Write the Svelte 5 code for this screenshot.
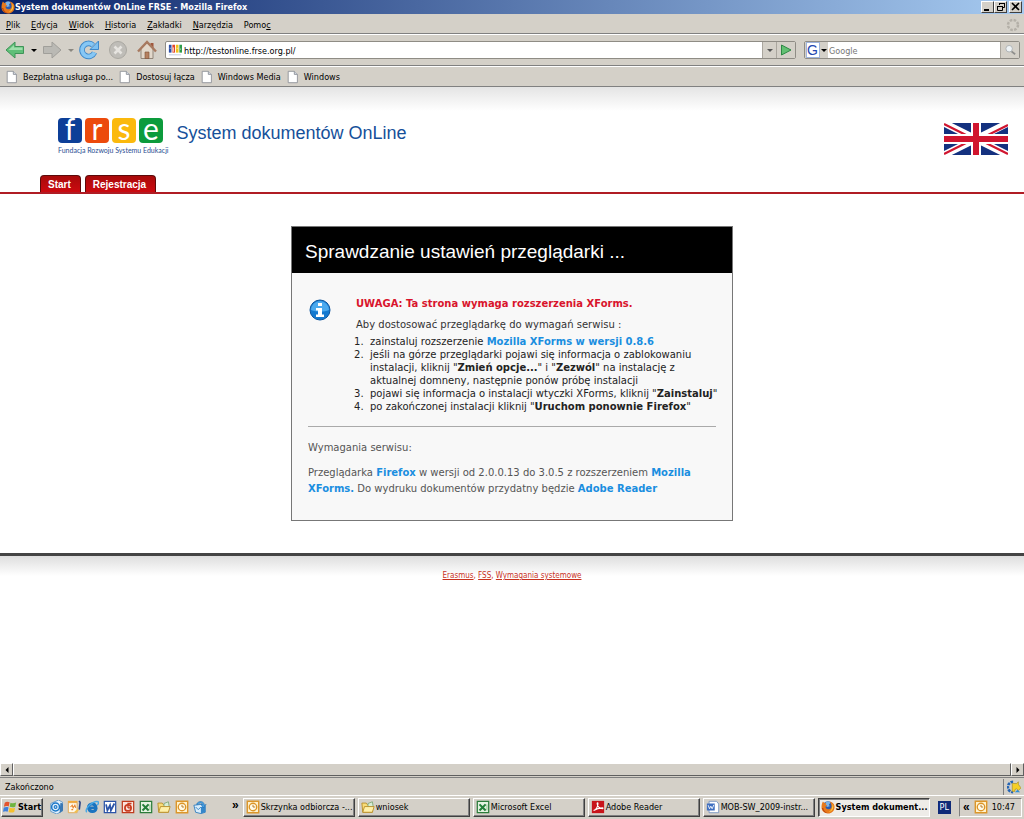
<script lang="ts">
	type Item = { name: string; icon: string; active?: boolean };

	const menu = [
		['', 'P', 'lik'],
		['', 'E', 'dycja'],
		['', 'W', 'idok'],
		['', 'H', 'istoria'],
		['', 'Z', 'akładki'],
		['', 'N', 'arzędzia'],
		['Pomo', 'c', '']
	];

	const bookmarks = ['Bezpłatna usługa po...', 'Dostosuj łącza', 'Windows Media', 'Windows'];

	const logo = [
		{ letter: 'f', color: 'blue' },
		{ letter: 'r', color: 'orange' },
		{ letter: 's', color: 'yellow' },
		{ letter: 'e', color: 'green' }
	];

	const quickLaunch: Item[] = [
		{ name: 'Outlook Express', icon: 'mail' },
		{ name: 'Pulpit', icon: 'note' },
		{ name: 'Internet Explorer', icon: 'ie' },
		{ name: 'Word', icon: 'word' },
		{ name: 'PowerPoint', icon: 'powerpoint' },
		{ name: 'Excel', icon: 'excel' },
		{ name: 'Folder', icon: 'folder' },
		{ name: 'Outlook', icon: 'outlook' },
		{ name: 'Poczta', icon: 'sync' }
	];

	const tasks: Item[] = [
		{ name: 'Skrzynka odbiorcza -...', icon: 'outlook' },
		{ name: 'wniosek', icon: 'folder' },
		{ name: 'Microsoft Excel', icon: 'excel' },
		{ name: 'Adobe Reader', icon: 'adobe' },
		{ name: 'MOB-SW_2009-instr...', icon: 'doc' },
		{ name: 'System dokument...', icon: 'firefox', active: true }
	];

	let address = $state('http://testonline.frse.org.pl/');
	let query = $state('');
</script>

{#snippet icon(name: string)}
	<svg class="icon" viewBox="0 0 16 16" aria-hidden="true">
		{#if name === 'firefox'}
			<circle cx="8" cy="8" r="6.6" fill="#2c5cae" />
			<path d="M5 3c2-2 5-1 6 0l-2 2 1 2-3 1-2-2z" fill="#7db4e6" />
			<path
				d="M2.2 1.6 4 3.6l2-.4-.7 1.9 2 1.3-2.2 1.4c0 2 1.7 3 3.4 2.8 3 0 4-2.400 3.300-5C11.400 3.600 10.400 2.400 9.500 1.800c4 .4 6.200 3.500 6 6.700-.3 4-3.300 6.900-7.300 6.900S.7 12.600.6 8.600C.5 6 1.200 3.500 2.200 1.600z"
				fill="#e8791a"
			/>
			<path d="M13.300 4.300c1.600 3 .8 8.400-4.400 9.300 2.800-1.600 4.300-4 4.400-9.300z" fill="#fbd042" />
			<path d="M1 9c1 4 4 6 7 6-3-1-5-3-5.500-6z" fill="#b8400d" />
		{:else if name === 'site'}
			<path fill="#2c4fa8" d="M1 2h3v9H1z" />
			<path fill="#e2452a" d="M5 2h3v9H5z" />
			<path fill="#f2c21a" d="M9 2h3v9H9z" />
			<path fill="#2f9c4a" d="M13 2h3v9h-3z" />
			<path d="M2 6h1M6 5v5M10 6h1M14 7h1" stroke="#fff" />
			<path d="M1 13.500h14" stroke="#b9c6e0" />
		{:else if name === 'page'}
			<path d="M2.500 1.500h7l3.500 3.500v9.500H2.500z" fill="#fff" stroke="#8b8f96" />
			<path d="M9.500 1.500V5H13" fill="#d5dce6" stroke="#8b8f96" />
		{:else if name === 'mail'}
			<path d="M2 4 11 0l5 3v9l-7 4-7-3z" fill="#e3f1fd" stroke="#3b83c0" stroke-width=".8" />
			<path d="m13 3 3 1v8l-4 3z" fill="#3a78b4" />
			<circle cx="7.500" cy="8" r="4.500" fill="none" stroke="#1c78c8" stroke-width="1.800" />
			<circle cx="7.500" cy="8" r="1.600" fill="none" stroke="#1c78c8" stroke-width="1.300" />
		{:else if name === 'note'}
			<path d="M1.500 3h10v11.500h-10z" fill="#fff8e8" stroke="#e0a54b" />
			<path d="M1 2h11" stroke="#f2a93a" stroke-width="2" />
			<path d="m4 8 2-2 1 3 2-3 1 3M5 11h2" stroke="#e9812b" fill="none" stroke-width="1.200" />
			<path d="m14 1 1 2-1 8" stroke="#2c4384" stroke-width="1.800" fill="none" />
			<path d="m9 14 4-3" stroke="#f2c14c" stroke-width="2" />
		{:else if name === 'ie'}
			<path
				d="M12.500 10.500C11.500 14 5 14.500 4 9c-.6-5.500 8-6.500 8.600 0H5"
				fill="none"
				stroke="#1a74c0"
				stroke-width="3.400"
			/>
			<path d="M2 14C-1 10 10 0 15 2c1 1 0 3-1 4" fill="none" stroke="#46a8e6" stroke-width="1.600" />
		{:else if name === 'word'}
			<path d="M1.500 1.500h13v13h-13z" fill="#fff" stroke="#2b54a8" stroke-width="1.400" />
			<path d="m3.500 5 1.500 7 3-6 1 6 4-8" fill="none" stroke="#2b54a8" stroke-width="2" />
		{:else if name === 'powerpoint'}
			<path d="M1.500 1.500h13v13h-13z" fill="#fbe4dc" stroke="#c03a1d" stroke-width="1.400" />
			<circle cx="8" cy="9" r="3.500" fill="none" stroke="#c93c20" stroke-width="2" />
			<path d="M8 9V4h4M8 9h4" stroke="#c93c20" fill="none" stroke-width="1.500" />
		{:else if name === 'excel'}
			<path d="M1.500 1.500h13v13h-13z" fill="#e5f3e2" stroke="#2b7c3a" stroke-width="1.400" />
			<path d="m4 5 7 7M11 5l-7 7" stroke="#24803a" stroke-width="2.400" />
			<path d="M12.500 5v7" stroke="#8abf8c" />
		{:else if name === 'folder'}
			<path d="M1 3.500h5l1.500 2H13V14H2z" fill="#f8dc79" stroke="#b78b25" />
			<path d="m8 4 5-2 1 6H8z" fill="#d8ecd5" stroke="#7fa878" />
			<path d="M4 7.500h11L13 14H2z" fill="#fff0a8" stroke="#b78b25" />
		{:else if name === 'outlook'}
			<path d="M1.500 1.500h13v13h-13z" fill="#fff3cf" stroke="#dc962a" stroke-width="1.600" />
			<circle cx="8" cy="8" r="4.300" fill="#fffbe8" stroke="#dd9427" stroke-width="1.500" />
			<path d="M8 5.500V8h2.500" fill="none" stroke="#b26f16" />
		{:else if name === 'sync'}
			<path d="m1 6 8-1 5 2v7l-5 1.500L3 14z" fill="#d9edfb" stroke="#2c7bbf" />
			<path d="m9 8 5-1v7l-5 1.500z" fill="#3687ca" />
			<path d="m3 8 3 3 3-3" fill="none" stroke="#2c7bbf" />
			<path d="M4 5c2-5 9-4 9 1l2-1-3 4-3-4h2c-1-2-4-2-5 0z" fill="#47a1e4" stroke="#1b65aa" stroke-width=".6" />
		{:else if name === 'adobe'}
			<path d="M1 1h14v14H1z" fill="#c8141b" />
			<path
				d="M3 12c3-1 5-5 5-8 0-1-1-1-1 0 0 3 3 6 6 6 1 0 1-1 0-1-3 0-7 1-10 3z"
				fill="none"
				stroke="#fff"
				stroke-width="1.200"
			/>
		{:else if name === 'doc'}
			<path d="M3.500 1.500H12l2.500 3v10h-11z" fill="#fff" stroke="#7591bf" />
			<path d="M1 4h9v8H1z" fill="#3f6fc0" />
			<path d="m2.500 6 1.500 4 1.500-3L7 10l2-4.500" fill="none" stroke="#fff" />
		{:else if name === 'windows'}
			<path d="M2 3c2-1.500 4-1 5.500-.3L6.500 7.500C5 6.800 3 6.700 1 7.700z" fill="#e5532d" />
			<path d="M8.500 3c2 .8 4 .8 6.500-.2l-1 4.900c-2.300.9-4.300.8-6.300.1z" fill="#6eb43f" />
			<path d="M.9 8.700c2-1 4-.9 5.400-.2l-1 4.800c-1.500-.8-3.400-.8-5.300.2z" fill="#3f7fda" />
			<path d="M7.400 8.900c2 .7 4 .8 6.400-.1l-1 4.800c-2.300.9-4.300.8-6.400 0z" fill="#f5c02c" />
		{:else if name === 'update'}
			<path d="M7 2a6 6 0 1 0 0 12" fill="none" stroke="#2565b5" stroke-width="3" stroke-dasharray="3 1" />
			<path d="M6 4h5l2-2v3l3 4-3 3-2-2-2 1v2H6z" fill="#f6cf27" stroke="#957a13" stroke-width=".6" />
			<path d="m9 14 3-3 3 3z" fill="#2d8fd6" />
		{/if}
	</svg>
{/snippet}

<div class="window">
	<header class="titlebar">
		{@render icon('firefox')}
		<h1>System dokumentów OnLine FRSE - Mozilla Firefox</h1>
		<div class="controls">
			<button aria-label="Minimalizuj">
				<svg viewBox="0 0 11 10"><path d="M2 8h5" stroke="#000" stroke-width="2" /></svg>
			</button>
			<button aria-label="Przywróć">
				<svg viewBox="0 0 11 10">
					<path d="M4.500 3V1.500h5v4H8M4 1.500h6M2.500 4.500h5v4h-5zM2 4.500h6" fill="none" stroke="#000" />
				</svg>
			</button>
			<button class="close" aria-label="Zamknij">
				<svg viewBox="0 0 11 10"><path d="m2 1 7 7M9 1 2 8" stroke="#000" stroke-width="1.600" /></svg>
			</button>
		</div>
	</header>

	<nav class="menubar">
		{#each menu as [before, key, after]}
			<button>{before}<u>{key}</u>{after}</button>
		{/each}
		<svg class="throbber" viewBox="0 0 14 14" aria-hidden="true">
			<circle cx="7" cy="7" r="5" fill="none" stroke="#b4b0a8" stroke-width="2.500" stroke-dasharray="2.600 1.327" />
		</svg>
	</nav>

	<div class="toolbar">
		<button class="tool arrow" aria-label="Wstecz">
			<svg viewBox="0 0 20 20">
				<path d="M1 10 10 2v4.500h8.500v7H10V18z" fill="#5fbf78" stroke="#3f9458" />
				<path d="m3.500 10 5.500-5v2.500h8.500V10z" fill="#9fdfac" />
			</svg>
		</button>
		<button class="drop" aria-label="Historia wstecz"><i class="caret"></i></button>
		<button class="tool arrow" aria-label="Do przodu">
			<svg viewBox="0 0 20 20">
				<path d="M19 10 10 2v4.500H1.500v7H10V18z" fill="#bab9b4" stroke="#a09f9a" />
			</svg>
		</button>
		<button class="drop" aria-label="Historia do przodu"><i class="caret dim"></i></button>
		<button class="tool" aria-label="Odśwież">
			<svg viewBox="0 0 20 20">
				<path d="M15.500 12.500a6.500 6.500 0 1 1-1.500-7.300" fill="none" stroke="#3f88c8" stroke-width="5.600" />
				<path d="M19.500 1v8.500H11z" fill="#7cc0f2" stroke="#3f88c8" />
				<path d="M15.500 12.500a6.500 6.500 0 1 1-1.500-7.300" fill="none" stroke="#86c7f5" stroke-width="3.800" />
			</svg>
		</button>
		<button class="tool" aria-label="Zatrzymaj">
			<svg viewBox="0 0 20 20">
				<circle cx="10" cy="10" r="8.500" fill="#bfbdb8" stroke="#aaa8a2" />
				<path d="m6.500 6.500 7 7M13.500 6.500l-7 7" stroke="#e6e4e0" stroke-width="2.600" />
			</svg>
		</button>
		<button class="tool" aria-label="Strona startowa">
			<svg viewBox="0 0 20 20">
				<path d="M13.500 3h3v5h-3z" fill="#a0573c" />
				<path d="M4 9v9.500h12V9l-6-6z" fill="#e2d8cb" stroke="#92867a" />
				<path d="M1 11.500 10 2l9 9.500" fill="none" stroke="#a87a60" stroke-width="2.400" />
				<path d="M8 12h4v6.500H8z" fill="#b58060" stroke="#7d5138" stroke-width=".6" />
			</svg>
		</button>

		<form class="field address" onsubmit={(e) => e.preventDefault()}>
			<span class="favicon">{@render icon('site')}</span>
			<input aria-label="Adres" bind:value={address} />
			<button type="button" class="end" aria-label="Lista adresów"><i class="caret grey"></i></button>
			<button class="end go" aria-label="Przejdź">
				<svg viewBox="0 0 12 12">
					<path d="m1.500 1 9.500 5-9.500 5z" fill="#63c073" stroke="#2c8844" />
				</svg>
			</button>
		</form>

		<form class="field search" onsubmit={(e) => e.preventDefault()}>
			<button type="button" class="engine" aria-label="Wyszukiwarka">
				<span class="g">G</span>
				<i class="caret"></i>
			</button>
			<input aria-label="Szukaj" placeholder="Google" bind:value={query} />
			<button class="end go" aria-label="Szukaj w Google">
				<svg viewBox="0 0 14 14">
					<path d="m8 8 5 4" stroke="#8e8e8c" stroke-width="2" />
					<circle cx="6" cy="5.500" r="3.800" fill="#eef3f6" stroke="#a8adb0" />
				</svg>
			</button>
		</form>
	</div>

	<nav class="bookmarks">
		{#each bookmarks as bookmark}
			<a href="#bookmark">{@render icon('page')}{bookmark}</a>
		{/each}
	</nav>

	<main>
		<div class="banner">
			<div class="brand">
				<div class="tiles">
					{#each logo as { letter, color }}
						<span class="tile {color}">{letter}</span>
					{/each}
				</div>
				<small>Fundacja Rozwoju Systemu Edukacji</small>
			</div>
			<h2>System dokumentów OnLine</h2>
			<a class="flag" href="#en" aria-label="English">
				<svg viewBox="0 0 64 32" preserveAspectRatio="none">
					<path d="M0 0h64v32H0z" fill="#14317f" />
					<path d="m0 0 64 32M64 0 0 32" stroke="#fff" stroke-width="7" />
					<path d="m0 1 30 15M64 2 36 16M0 31l28-14M64 31 36 17" stroke="#d0152f" stroke-width="2.200" />
					<path d="M32 0v32M0 16h64" stroke="#fff" stroke-width="10" />
					<path d="M32 0v32M0 16h64" stroke="#d0152f" stroke-width="6" />
				</svg>
			</a>
		</div>

		<nav class="tabs">
			<a href="#start">Start</a>
			<a href="#rejestracja">Rejestracja</a>
		</nav>

		<article class="card">
			<h3>Sprawdzanie ustawień przeglądarki ...</h3>
			<div class="body">
				<section class="notice">
					<svg viewBox="0 0 22 22" aria-hidden="true">
						<circle cx="11" cy="11" r="10" fill="#1479cf" stroke="#0c56a0" />
						<path d="M2 11a9 9 0 0 1 18 0c-5 2-12 2-18 0z" fill="#4aa9ee" />
						<path d="M9 4h4v3H9zM7 9h6v6.500h2V18H7v-2.500h2v-4H7z" fill="#fff" />
					</svg>
					<div>
						<p class="warning">UWAGA: Ta strona wymaga rozszerzenia XForms.</p>
						<p class="intro">Aby dostosować przeglądarkę do wymagań serwisu :</p>
						<ol>
							<li>zainstaluj rozszerzenie <a href="#xforms">Mozilla XForms w wersji 0.8.6</a></li>
							<li>
								jeśli na górze przeglądarki pojawi się informacja o zablokowaniu<br />
								instalacji, kliknij "<b>Zmień opcje...</b>" i "<b>Zezwól</b>" na instalację z<br />
								aktualnej domneny, następnie ponów próbę instalacji
							</li>
							<li>pojawi się informacja o instalacji wtyczki XForms, kliknij "<b>Zainstaluj</b>"</li>
							<li>po zakończonej instalacji kliknij "<b>Uruchom ponownie Firefox</b>"</li>
						</ol>
					</div>
				</section>
				<section class="requirements">
					<p>Wymagania serwisu:</p>
					<p>
						Przeglądarka <a href="#firefox">Firefox</a> w wersji od 2.0.0.13 do 3.0.5 z rozszerzeniem
						<a href="#xforms">Mozilla<br />XForms.</a> Do wydruku dokumentów przydatny będzie
						<a href="#reader">Adobe Reader</a>
					</p>
				</section>
			</div>
		</article>

		<footer>
			<a href="#erasmus">Erasmus</a>, <a href="#fss">FSS</a>, <a href="#wymagania">Wymagania systemowe</a>
		</footer>
	</main>

	<div class="scrollbar">
		<button aria-label="Przewiń w lewo">
			<svg viewBox="0 0 8 8"><path d="M5.500 1v6L2.500 4z" /></svg>
		</button>
		<div class="thumb"></div>
		<button aria-label="Przewiń w prawo">
			<svg viewBox="0 0 8 8"><path d="M2.500 1v6l3-3z" /></svg>
		</button>
	</div>

	<div class="status">
		<span>Zakończono</span>
		<span class="update">{@render icon('update')}</span>
	</div>

	<div class="taskbar">
		<button class="start">{@render icon('windows')}Start</button>
		<div class="quick">
			{#each quickLaunch as { name, icon: glyph }}
				<button aria-label={name}>{@render icon(glyph)}</button>
			{/each}
		</div>
		<button class="more" aria-label="Więcej">»</button>
		<div class="tasks">
			{#each tasks as { name, icon: glyph, active }}
				<button class="task" class:active>{@render icon(glyph)}<span>{name}</span></button>
			{/each}
		</div>
		<span class="lang">PL</span>
		<div class="tray">
			<span class="chevron">«</span>
			{@render icon('outlook')}
			<time>10:47</time>
		</div>
	</div>
</div>

<style>
	:global(body) {
		margin: 0;
	}

	.window {
		--face: #d4d0c8;
		--light: #fff;
		--shadow: #808080;
		--ui: 'DejaVu Sans Condensed', 'DejaVu Sans', sans-serif;
		--verdana: 'DejaVu Sans', sans-serif;
		--arial: 'Liberation Sans', sans-serif;
		display: flex;
		flex-direction: column;
		min-height: 100vh;
		background: var(--face);
		color: #000;
		font: 9px/14px var(--ui);
	}

	button {
		display: flex;
		align-items: center;
		justify-content: center;
		box-sizing: border-box;
		padding: 0;
		border: 0;
		background: none;
		color: inherit;
		font: inherit;
	}

	a {
		color: inherit;
		text-decoration: none;
	}

	svg {
		display: block;
		flex: none;
	}

	.icon {
		width: 14px;
		height: 14px;
	}

	.titlebar {
		display: flex;
		align-items: center;
		height: 14px;
		padding: 0 2px 0 1px;
		background: linear-gradient(to right, #0a246a, #a6caf0);
	}

	.titlebar h1 {
		flex: 1;
		margin: 0;
		color: #fff;
		font: bold 9px/14px var(--ui);
	}

	.controls {
		display: flex;
	}

	.controls button {
		width: 13px;
		height: 12px;
		border: 1px solid;
		border-color: #fff #404040 #404040 #fff;
		background: var(--face);
	}

	.controls svg {
		width: 11px;
		height: 10px;
	}

	.controls .close {
		margin-left: 2px;
	}

	.menubar {
		display: flex;
		align-items: center;
		gap: 11px;
		height: 20px;
		padding: 3px 4px 0 6px;
		border-bottom: 1px solid var(--shadow);
		box-sizing: border-box;
	}

	.throbber {
		width: 14px;
		height: 14px;
		margin-left: auto;
	}

	.toolbar {
		display: flex;
		align-items: center;
		height: 32px;
		padding: 0 4px;
		box-sizing: border-box;
		border-top: 1px solid var(--light);
		border-bottom: 1px solid var(--shadow);
	}

	.tool {
		width: 22px;
		height: 22px;
		margin-right: 7px;
	}

	.tool svg {
		width: 20px;
		height: 20px;
	}

	.tool.arrow {
		margin-right: 0;
	}

	.drop {
		width: 15px;
		height: 22px;
	}

	.caret {
		border: 3px solid transparent;
		border-top-color: #000;
		border-bottom: 0;
	}

	.caret.dim {
		border-top-color: #8a8780;
	}

	.caret.grey {
		border-top-color: #555;
	}

	.field {
		display: flex;
		height: 18px;
		box-sizing: border-box;
		border: 1px solid #8f8c85;
		border-radius: 2px;
		background: #fff;
	}

	.field input {
		flex: 1;
		min-width: 0;
		padding: 1px 1px 0;
		border: 0;
		outline: 0;
		background: none;
		color: #000;
		font: 9px/14px var(--ui);
	}

	.field input::placeholder {
		color: #777;
		opacity: 1;
	}

	.address {
		flex: 3;
	}

	.favicon {
		display: flex;
		align-items: center;
		padding: 0 1px 0 2px;
	}

	.search {
		flex: 1;
		margin-left: 8px;
		max-width: 216px;
		min-width: 216px;
	}

	.end {
		width: 14px;
		border-left: 1px solid #aaa69e;
		background: var(--face);
	}

	.go {
		width: 19px;
	}

	.go svg {
		width: 12px;
		height: 12px;
	}

	.engine {
		gap: 2px;
		width: 23px;
		background: var(--face);
	}

	.g {
		width: 12px;
		height: 14px;
		background: #fff;
		box-shadow: 0 0 0 1px #9fb4dc;
		color: #2346b0;
		font: 14px/14px var(--arial);
	}

	.bookmarks {
		display: flex;
		align-items: center;
		gap: 5px;
		height: 21px;
		padding: 1px 5px 0;
		box-sizing: border-box;
		border-top: 1px solid var(--light);
		border-bottom: 1px solid var(--shadow);
	}

	.bookmarks a {
		display: flex;
		gap: 4px;
	}

	main {
		display: flex;
		flex-direction: column;
		flex: 1;
		background: #fff linear-gradient(#e4e4e4, #fff) no-repeat 0 0 / 100% 24px;
		font: 10px/13px var(--verdana);
	}

	.banner {
		display: flex;
		align-items: flex-start;
		padding: 31px 16px 0 58px;
	}

	.tiles {
		display: flex;
		gap: 3px;
	}

	.tile {
		width: 24px;
		height: 25px;
		border-radius: 4px;
		color: #fff;
		font: 30px/21px Lato, sans-serif;
		text-align: center;
	}

	.blue {
		background: #0d3f98;
	}

	.orange {
		background: #ec4a0c;
	}

	.yellow {
		background: #fbb90d;
	}

	.green {
		background: #0c9b3c;
	}

	.brand small {
		display: block;
		color: #2c4f93;
		font: 7px/14px Lato, sans-serif;
		white-space: nowrap;
	}

	.banner h2 {
		flex: 1;
		margin: 3px 0 0 8px;
		color: #15509a;
		font: 18px/24px var(--arial);
	}

	.flag svg {
		width: 64px;
		height: 32px;
		margin-top: 5px;
	}

	.tabs {
		display: flex;
		gap: 4px;
		margin-top: 18px;
		padding-left: 40px;
		border-bottom: 2px solid #b01c24;
	}

	.tabs a {
		padding: 2px 9px 1px 7px;
		border: 1px solid #5c0a0a;
		border-bottom: 0;
		border-radius: 4px 4px 0 0;
		background: linear-gradient(#a80a0a, #cc0a10);
		color: #fff;
		font: bold 10px/13px var(--arial);
	}

	.card {
		align-self: center;
		width: 442px;
		margin: 32px 0;
		box-sizing: border-box;
		border: 1px solid #777;
		background: #f8f8f8;
	}

	.card h3 {
		margin: 0;
		padding: 13px 13px 9px;
		background: #000;
		color: #fff;
		font: 19px/24px var(--arial);
	}

	.card a {
		color: #1a8ee0;
		font-weight: bold;
	}

	.body {
		padding: 24px 16px 14px;
	}

	.notice {
		display: flex;
		gap: 25px;
		padding-bottom: 13px;
		border-bottom: 1px solid #aaa;
		white-space: nowrap;
	}

	.notice svg {
		width: 22px;
		height: 22px;
		margin: 2px 0 0 1px;
	}

	.notice p {
		margin: 0 0 8px;
	}

	.notice .warning {
		color: #d9142c;
		font-weight: bold;
	}

	.notice .intro {
		margin-bottom: 4px;
		color: #333;
	}

	ol {
		margin: 0;
		padding-left: 14px;
		color: #222;
	}

	li::marker {
		content: counter(list-item) '.\a0\a0';
	}

	.requirements {
		padding-top: 13px;
		color: #555;
		line-height: 16px;
		white-space: nowrap;
	}

	.requirements p {
		margin: 0 0 9px;
	}

	footer {
		padding-top: 13px;
		border-top: 3px solid #444;
		background: linear-gradient(#dedede, #fff) no-repeat 0 0 / 100% 20px;
		color: #c8321e;
		font: 8px/13px var(--ui);
		text-align: center;
	}

	footer a {
		text-decoration: underline;
	}

	.scrollbar {
		display: flex;
		height: 13px;
	}

	.scrollbar button,
	.thumb {
		box-sizing: border-box;
		border: 1px solid;
		border-color: #fff #606060 #606060 #fff;
		background: var(--face);
	}

	.scrollbar button {
		width: 13px;
	}

	.scrollbar svg {
		width: 8px;
		height: 8px;
	}

	.thumb {
		flex: 1;
	}

	.status {
		display: flex;
		align-items: center;
		justify-content: space-between;
		height: 18px;
		padding-left: 5px;
		margin-top: 1px;
		box-sizing: border-box;
		border-top: 1px solid var(--shadow);
	}

	.update {
		padding: 1px 3px;
		border-left: 1px solid var(--shadow);
	}

	.taskbar {
		display: flex;
		align-items: center;
		height: 24px;
		padding: 0 2px 1px 1px;
		box-sizing: border-box;
		border-top: 1px solid var(--light);
	}

	.start,
	.task {
		height: 19px;
		border: 1px solid;
		border-color: #fff #404040 #404040 #fff;
		box-shadow: inset -1px -1px var(--shadow);
	}

	.start {
		gap: 1px;
		width: 42px;
		font-weight: bold;
	}

	.quick {
		display: flex;
		gap: 4px;
		padding-left: 6px;
	}

	.more {
		margin: 0 4px 4px 25px;
		font: bold 12px/14px var(--arial);
	}

	.tasks {
		display: flex;
		flex: 1;
		gap: 3px;
		min-width: 0;
	}

	.task {
		flex: 1;
		justify-content: flex-start;
		gap: 1px;
		min-width: 0;
		padding-left: 2px;
		white-space: nowrap;
	}

	.task.active {
		border-color: #404040 #fff #fff #404040;
		box-shadow: inset 1px 1px var(--shadow);
		background: #eeece8;
		font-weight: bold;
	}

	.lang {
		margin: 0 8px;
		padding: 0 2px;
		background: #0f2a78;
		color: #fff;
		line-height: 13px;
	}

	.tray {
		display: flex;
		align-items: center;
		gap: 4px;
		height: 19px;
		padding: 0 6px 0 3px;
		box-sizing: border-box;
		border: 1px solid;
		border-color: var(--shadow) #fff #fff var(--shadow);
	}

	.chevron {
		font: bold 12px/14px var(--arial);
	}
</style>
